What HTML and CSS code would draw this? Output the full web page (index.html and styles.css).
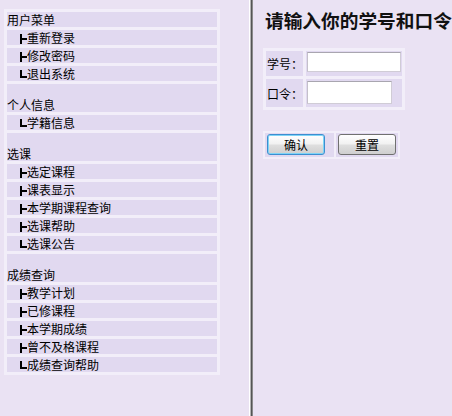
FILE: index.html
```html
<!DOCTYPE html>
<html>
<head>
<meta charset="utf-8">
<title>学生选课系统</title>
<link rel="stylesheet" href="styles.css">
</head>
<body>

<div class="frames">
	<div class="menu">
		<table class="nav">
			<tr><td>用户菜单</td></tr>
			<tr><td class="sub"><i class="tee"></i>重新登录</td></tr>
			<tr><td class="sub"><i class="tee"></i>修改密码</td></tr>
			<tr><td class="sub"><i class="end"></i>退出系统</td></tr>
			<tr><td><br />个人信息</td></tr>
			<tr><td class="sub"><i class="end"></i>学籍信息</td></tr>
			<tr><td><br />选课</td></tr>
			<tr><td class="sub"><i class="tee"></i>选定课程</td></tr>
			<tr><td class="sub"><i class="tee"></i>课表显示</td></tr>
			<tr><td class="sub"><i class="tee"></i>本学期课程查询</td></tr>
			<tr><td class="sub"><i class="tee"></i>选课帮助</td></tr>
			<tr><td class="sub"><i class="end"></i>选课公告</td></tr>
			<tr><td><br />成绩查询</td></tr>
			<tr><td class="sub"><i class="tee"></i>教学计划</td></tr>
			<tr><td class="sub"><i class="tee"></i>已修课程</td></tr>
			<tr><td class="sub"><i class="tee"></i>本学期成绩</td></tr>
			<tr><td class="sub"><i class="tee"></i>曾不及格课程</td></tr>
			<tr><td class="sub"><i class="end"></i>成绩查询帮助</td></tr>
		</table><!-- end nav -->
	</div><!-- end menu -->

	<div class="divider"></div>

	<div class="main">
		<h3>请输入你的学号和口令</h3>
		<table class="login">
			<tr class="r1">
				<td class="lbl">学号：</td>
				<td class="fld"><input type="text" class="uid" /></td>
			</tr>
			<tr class="r2">
				<td class="lbl">口令：</td>
				<td class="fld"><input type="password" class="pwd" /></td>
			</tr>
		</table>

		<table class="btns">
			<tr>
				<td class="b1"><button class="ok">确认</button></td>
				<td class="b2"><button>重置</button></td>
			</tr>
		</table>
	</div><!-- end main -->
</div>

</body>
</html>
```

FILE: styles.css
```css
html, body {
margin: 0;
padding: 0;
height: 100%;
}

body {
font-family: "Noto Sans CJK SC", "DejaVu Sans", sans-serif;
font-size: 12px;
color: #000;
background: #eae2f3;
}

.frames {
display: flex;
height: 416px;
}

.menu {
width: 249px;
padding: 9px 0 0 4px;
box-sizing: border-box;
}

.divider {
width: 4px;
background: linear-gradient(to right, #ffffff 0, #ffffff 1px, #b4b4b4 1px, #b4b4b4 2px, #555555 2px, #555555 3px, #8a8a8a 3px);
}

.main {
flex: 1;
padding: 9px 0 0 10px;
overflow: hidden;
}

/* left menu */
.nav {
width: 216px;
border-spacing: 3px;
background: #f2eef9;
}

.nav td {
background: #e1d9f0;
padding: 1px 0;
height: 13px;
line-height: 13px;
white-space: nowrap;
}

.nav td.sub {
padding-left: 13px;
}

/* tree branches, drawn with borders */
.nav i {
display: inline-block;
box-sizing: border-box;
width: 7px;
height: 10px;
vertical-align: -1px;
border-left: 2px solid #000;
}

.nav i.tee {
background: linear-gradient(#000, #000) no-repeat 0 4px / 5px 2px;
}

.nav i.end {
height: 8px;
vertical-align: 1px;
background: linear-gradient(#000, #000) no-repeat 0 6px / 5px 2px;
}

/* login form */
h3 {
margin: 0 0 18px 2px;
font-size: 18.7px;
line-height: 21px;
font-weight: bold;
white-space: nowrap;
color: #111;
}

.login {
border-spacing: 3px;
background: #f2eef9;
}

.login td {
background: #e1d9f0;
padding: 0 0 0 1px;
}

.login .lbl {
width: 36px;
}

.login .fld {
width: 95px;
padding: 1px 0 0 1px;
vertical-align: top;
}

.r1 td { height: 24px; }
.r2 td { height: 27px; }

input {
display: block;
box-sizing: border-box;
margin: 0;
background: #fff;
border: 1px solid #d0ccd6;
border-top-color: #a9a6b0;
border-left-color: #c4c0ca;
}

.uid { width: 94px; height: 20px; }
.pwd { width: 85px; height: 23px; margin-top: 1px; }

.btns {
margin-top: 21px;
border-spacing: 2px;
background: #f2eef9;
}

.btns td {
background: #e1d9f0;
padding: 1px 0 2px 2px;
}

.btns .b1 { width: 67px; }
.btns .b2 { width: 60px; }

button {
display: block;
width: 58px;
height: 21px;
padding: 0;
font-family: "Noto Sans CJK SC", sans-serif;
font-size: 12px;
line-height: 17px;
color: #000;
border: 1px solid #707070;
border-radius: 3px;
background: linear-gradient(to bottom, #ffffff, #f2f2f2 45%, #dedede 55%, #cfcfcf);
}

button.ok {
border-color: #3c8ed0;
box-shadow: inset 0 0 0 1px #7ed4f6;
}
```
